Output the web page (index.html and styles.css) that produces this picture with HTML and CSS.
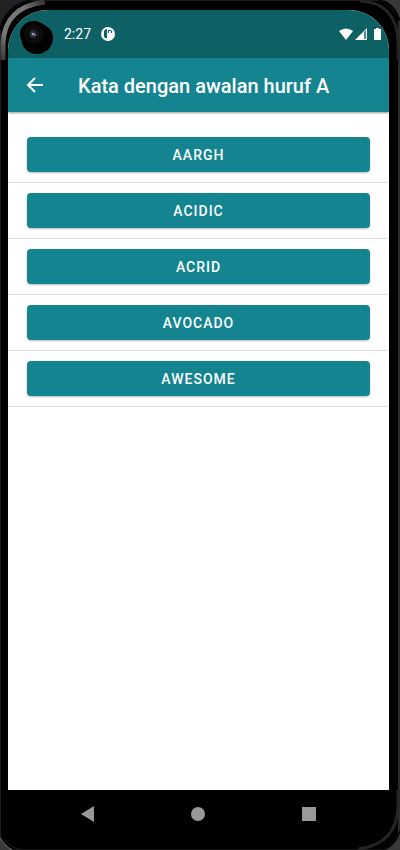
FILE: index.html
```html
<!DOCTYPE html>
<html lang="id">
<head>
<meta charset="utf-8">
<meta name="viewport" content="width=device-width, initial-scale=1">
<title>Kata dengan awalan huruf A</title>
<link rel="stylesheet" href="styles.css">
</head>
<body>
<div class="phone">
  <svg class="corner top-left" viewBox="0 0 60 60" aria-hidden="true">
    <defs>
      <linearGradient id="rim" gradientUnits="userSpaceOnUse" x1="0" y1="60" x2="50" y2="0">
        <stop offset="0" stop-color="#333"/>
        <stop offset=".3" stop-color="#777"/>
        <stop offset=".7" stop-color="#777"/>
        <stop offset="1" stop-color="#222"/>
      </linearGradient>
    </defs>
    <path d="M0 0H30C14 3 4 12 0 26Z" fill="#222225"/>
    <path d="M3 60V43C4 20 18 5 45 2" fill="none" stroke="url(#rim)" stroke-width="5"/>
    <path d="M0 30C4 14 15 4 31 0" fill="none" stroke="#080808" stroke-width="2"/>
  </svg>
  <svg class="corner top-right" viewBox="0 0 60 60" aria-hidden="true">
    <path d="M44 0H60V18C57 10 52 4 44 0Z" fill="#39393c"/>
    <path d="M20 1C44 2 58 16 58 43V60" fill="none" stroke="#242424" stroke-width="3"/>
    <path d="M39 0C49 4 56 11 60 21" fill="none" stroke="#080808" stroke-width="2"/>
  </svg>
  <svg class="corner bottom-left" viewBox="0 0 60 60" aria-hidden="true">
    <path d="M0 47C3 53 7 57 13 60H0Z" fill="#39393c"/>
    <path d="M0 48C3 53 7 57 12 60" fill="none" stroke="#777" stroke-width="1"/>
    <path d="M0 45C5 53 12 58 24 60" fill="none" stroke="#1c1c1c" stroke-width="1"/>
  </svg>
  <svg class="corner bottom-right" viewBox="0 0 60 60" aria-hidden="true">
    <path d="M60 44C57 51 52 57 45 60H60Z" fill="#39393c"/>
    <path d="M58 0V17C57 42 43 56 18 59" fill="none" stroke="#242424" stroke-width="3"/>
    <path d="M60 41C57 49 50 56 42 60" fill="none" stroke="#080808" stroke-width="2"/>
  </svg>
  <div class="screen">
    <header class="status">
      <svg class="camera" viewBox="0 0 34 36" aria-hidden="true">
        <path d="M14 1C6 1 0 7 0 14C0 18 2 20 2 23C4 30 10 34 17 34C26 34 33 27 33 18C33 12 30 8 26 6C22 3 18 1 14 1Z" fill="#000"/>
        <circle cx="14" cy="14" r="10" fill="#0b0b0c"/>
        <circle cx="14" cy="14" r="5" fill="#17171c"/>
        <circle cx="13" cy="14" r="3" fill="#33384e"/>
        <circle cx="13" cy="14" r="1" fill="#b9c2dd"/>
        <circle cx="15" cy="15" r="1" fill="#777d9c"/>
      </svg>
      <span class="time">2:27</span>
      <svg class="notice" viewBox="0 0 14 14" aria-hidden="true">
        <circle cx="7" cy="7" r="7" fill="#fff"/>
        <path d="M3 4Q4 2 6 2V11H4Q3 10 3 9ZM7 3H9V4H8V6H7ZM9 3Q12 3 11 6H10V4H9Z" fill="#0d6165"/>
      </svg>
      <svg class="signals" viewBox="0 0 44 14" aria-hidden="true">
        <path d="M0 3Q7-2 14 3L7 12Z" fill="#fff"/>
        <path d="M28 0V12H16Z" fill="#fff"/>
        <path d="M25 4L27 2V11H25Z" fill="#4c898c"/>
        <path d="M37 0H40V1H42V12H35V1H37Z" fill="#fff"/>
      </svg>
    </header>
    <div class="appbar">
      <button class="back" type="button" aria-label="Kembali">
        <svg viewBox="0 0 16 16" aria-hidden="true"><path d="M8 1L1 8L8 15M1 8H16" fill="none" stroke="#fff" stroke-width="2"/></svg>
      </button>
      <h1>Kata dengan awalan huruf A</h1>
    </div>
    <main>
      <ul class="words">
        <li><button type="button">AARGH</button></li>
        <li><button type="button">ACIDIC</button></li>
        <li><button type="button">ACRID</button></li>
        <li><button type="button">AVOCADO</button></li>
        <li><button type="button">AWESOME</button></li>
      </ul>
    </main>
  </div>
  <nav class="navigation" aria-label="Navigasi sistem">
    <button type="button" aria-label="Kembali"><svg viewBox="0 0 16 16" aria-hidden="true"><path d="M1 8L14 0V16Z"/></svg></button>
    <button type="button" aria-label="Beranda"><svg viewBox="0 0 16 16" aria-hidden="true"><circle cx="8" cy="8" r="7"/></svg></button>
    <button type="button" aria-label="Aplikasi terbaru"><svg viewBox="0 0 16 16" aria-hidden="true"><path d="M1 1H15V15H1Z"/></svg></button>
  </nav>
</div>
</body>
</html>
```
FILE: styles.css
```css
* { box-sizing: border-box; }

body {
  margin: 0;
  background: #000;
  font-family: Roboto, sans-serif;
}

button {
  border: 0;
  padding: 0;
  background: none;
  color: #fff;
  font-family: inherit;
}

svg { display: block; }

.phone {
  position: relative;
  display: flex;
  flex-direction: column;
  min-height: 100vh;
  padding: 10px 11px 0 8px;
  background: #000;
  box-shadow: inset 1px 0 #1c1c1c, inset -2px 0 #2c2c2c, inset 0 1px #1c1c1c, inset 0 -1px #141414;
}

.corner { position: absolute; width: 60px; height: 60px; }
.top-left { top: 0; left: 0; }
.top-right { top: 0; right: 0; }
.bottom-left { bottom: 0; left: 0; }
.bottom-right { bottom: 0; right: 0; }

.screen {
  position: relative;
  flex: 1;
  border-radius: 40px 40px 0 0;
  overflow: hidden;
  background: #fff;
}

.status {
  display: flex;
  align-items: center;
  height: 48px;
  padding: 0 6px 0 12px;
  background: #0d6165;
  color: #fff;
}

.camera { width: 34px; height: 36px; margin-top: 8px; }
.time { margin-left: 10px; font-size: 14px; }
.notice { width: 14px; height: 14px; margin-left: 10px; }
.signals { width: 44px; height: 14px; margin: 2px 0 0 auto; }

.appbar {
  display: flex;
  align-items: center;
  height: 54px;
  padding: 0 19px;
  background: #138490;
  box-shadow: 0 1px 2px #0006;
  color: #fff;
}

.back svg { width: 16px; height: 16px; }

.appbar h1 {
  margin: 2px 0 0 35px;
  font-size: 20px;
  font-weight: 500;
  line-height: 24px;
  white-space: nowrap;
}

.words {
  margin: 0;
  padding: 15px 0 0;
  list-style: none;
}

.words li {
  padding: 10px 19px;
  border-bottom: 1px solid #dedede;
}

.words button {
  display: block;
  width: 100%;
  height: 35px;
  border-radius: 4px;
  background: #138490;
  box-shadow: 0 1px 2px #0004;
  font-size: 14px;
  font-weight: 500;
  letter-spacing: 1px;
}

.navigation {
  display: flex;
  justify-content: space-around;
  align-items: center;
  height: 60px;
  padding: 0 25px 12px;
}

.navigation svg { width: 16px; height: 16px; fill: #999; }
```
